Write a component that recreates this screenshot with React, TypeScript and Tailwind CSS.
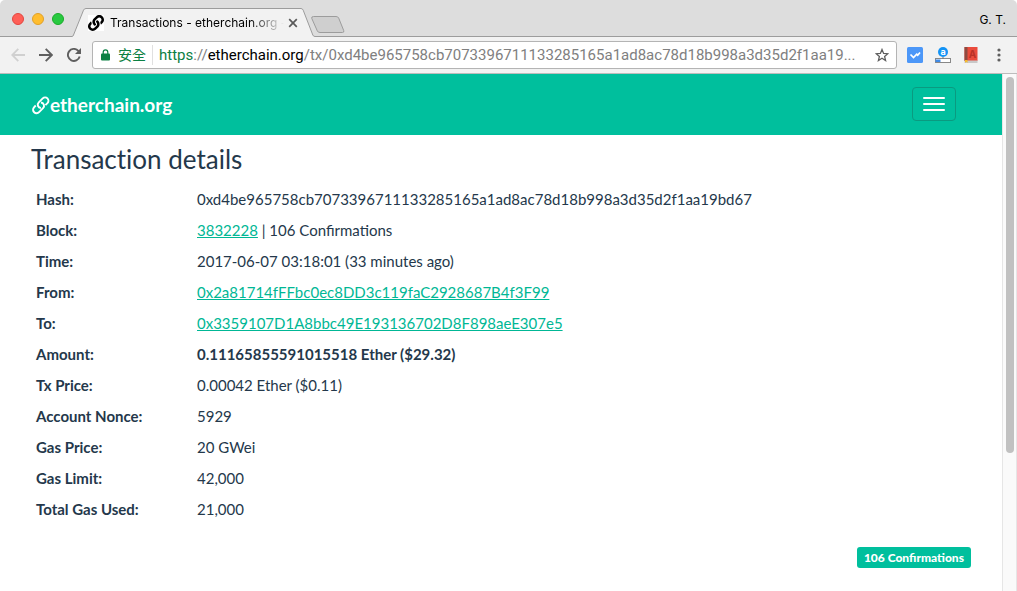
import type { ReactNode } from 'react';
import { FaLink } from 'react-icons/fa';

const ADDRESS_REST = '/tx/0xd4be965758cb7073396711133285165a1ad8ac78d18b998a3d35d2f1aa19...';

const ChainIcon = ({ className }: { className?: string }) => (
  <svg viewBox="0 0 24 24" className={className} fill="none" stroke="currentColor" aria-hidden="true">
    <path d="M12.500 8.200a4.200 4.200 0 0 1 2.700 7.200l-5 5a4.200 4.200 0 0 1-6.400-6l2.200-2.400" />
    <path d="M12.500 15.200a4.200 4.200 0 0 1-2.700-7.200l5-5a4.200 4.200 0 0 1 6 6l-2.600 2.600" />
  </svg>
);

const TabStrip = () => (
  <div className="flex h-[37px] items-end overflow-hidden rounded-t-[5px] bg-[#dddddd]">
    <div className="flex h-full w-[72px] shrink-0 items-center gap-2 border-b border-[#9c9c9c] pl-3 pt-0.5">
      <button aria-label="Close window" className="size-3 rounded-full border border-[#e2463f] bg-[#ff5f57]" />
      <button aria-label="Minimize window" className="size-3 rounded-full border border-[#e0a029] bg-[#ffbd2e]" />
      <button aria-label="Zoom window" className="size-3 rounded-full border border-[#1aab29] bg-[#28c940]" />
    </div>
    <svg viewBox="0 0 14 29" className="h-[29px] w-[14px] shrink-0" aria-hidden="true">
      <path d="M0 29v-.5q1 0 1.5-1.5L11.500 2.200Q12.200.5 14 .5V29Z" fill="#f2f2f2" />
      <path d="M0 28.500q1 0 1.500-1.500L11.500 2.200Q12.200.5 14 .5" fill="none" stroke="#9c9c9c" />
    </svg>
    <div className="flex h-[29px] w-[215px] shrink-0 items-center border-t border-[#9c9c9c] bg-[#f2f2f2]">
      <span className="ml-0.5 bg-white text-black">
        <FaLink className="size-4" aria-hidden="true" />
      </span>
      <span className="ml-1.5 w-[174px] whitespace-nowrap bg-linear-to-r from-black from-80% to-transparent to-100% bg-clip-text font-[Inter,sans-serif] text-xs text-transparent">
        Transactions - etherchain.org -
      </span>
      <button aria-label="Close tab" className="ml-1">
        <svg viewBox="0 0 10 10" className="size-[10px]" stroke="#5a5a5a" strokeWidth="1.7" aria-hidden="true">
          <path d="m1.200 1.200 7.600 7.600m0-7.600-7.600 7.600" />
        </svg>
      </button>
    </div>
    <svg viewBox="0 0 14 29" className="h-[29px] w-[14px] shrink-0" aria-hidden="true">
      <path d="M0 .5q1.500 0 2.200 1.700L11.800 27q.6 1.500 2.200 1.500v.5H0Z" fill="#f2f2f2" />
      <path d="M0 .5q1.500 0 2.200 1.700L11.800 27q.6 1.500 2.200 1.500" fill="none" stroke="#9c9c9c" />
    </svg>
    <div className="flex h-full grow items-center justify-between border-b border-[#9c9c9c] pr-[11px]">
      <button aria-label="New tab" className="-ml-1 mt-3">
        <svg viewBox="0 0 34 17" className="h-[17px] w-[34px]" aria-hidden="true">
          <path
            d="M2.500.5h22.500q2 0 2.700 1.600l5 12.400q.7 2-1.200 2H9q-2 0-2.700-1.600L.8 2.500Q.2.5 2.500.5Z"
            fill="#cfcfcf"
            stroke="#9c9c9c"
          />
        </svg>
      </button>
      <button className="pt-1 font-[Inter,sans-serif] text-xs text-black">G. T.</button>
    </div>
  </div>
);

const Toolbar = () => (
  <div className="flex h-[37px] items-center border-b border-[#bcbcbc] bg-[#f2f2f2] pl-[11px] pr-3">
    <button aria-label="Back" className="text-[#d0d0d0]">
      <svg viewBox="0 0 14 14" className="size-[14px]" fill="none" stroke="currentColor" strokeWidth="1.800" aria-hidden="true">
        <path d="M14 7H1.500M7.300.8 1.200 7l6.100 6.200" />
      </svg>
    </button>
    <button aria-label="Forward" className="ml-3.5 text-[#5f5f5f]">
      <svg viewBox="0 0 14 14" className="size-[14px]" fill="none" stroke="currentColor" strokeWidth="1.900" aria-hidden="true">
        <path d="M0 7h12.500M6.700.8 12.800 7l-6.100 6.200" />
      </svg>
    </button>
    <button aria-label="Reload" className="ml-3.5 text-[#5f5f5f]">
      <svg viewBox="0 0 14 14" className="size-[14px]" fill="none" stroke="currentColor" strokeWidth="1.900" aria-hidden="true">
        <path d="M12.700 8.500A6 6 0 1 1 11.300 2.800L12.500 4.200" />
        <path d="M14 0v6H8Z" fill="currentColor" stroke="none" />
      </svg>
    </button>
    <div className="ml-[11px] flex h-7 min-w-0 grow items-center rounded-[3px] border border-[#b4b4b4] bg-white font-[Roboto,'Noto_Sans_CJK_TC',sans-serif]">
      <svg viewBox="0 0 9 12" className="ml-2 h-3 w-[9px] shrink-0 text-[#0b8043]" aria-hidden="true">
        <path d="M2.200 5V3.200a2.300 2.300 0 0 1 4.600 0V5" fill="none" stroke="currentColor" strokeWidth="1.200" />
        <rect y="4.500" width="9" height="7" rx="1" fill="currentColor" />
      </svg>
      <span className="ml-2 shrink-0 text-sm text-[#0b8043]">安全</span>
      <span className="ml-1.5 h-5 w-px shrink-0 bg-[#e0e0e0]" />
      <span className="ml-1.5 grow whitespace-nowrap text-[15px] text-[#808080]">
        <span className="text-[#0b8043]">https</span>://<span className="text-black">etherchain.org</span>
        {ADDRESS_REST}
      </span>
      <button aria-label="Bookmark this page" className="mr-[7px] shrink-0">
        <svg viewBox="0 0 14 14" className="size-[14px]" fill="none" stroke="#5f5f5f" strokeWidth="1.300" aria-hidden="true">
          <path d="m7 1.500 1.600 3.900 4.200.3-3.200 2.700 1 4.100L7 10.300l-3.600 2.200 1-4.100L1.200 5.700l4.200-.3Z" />
        </svg>
      </button>
    </div>
    <div className="ml-2.5 flex shrink-0 items-center">
      <button aria-label="Tasks extension">
        <svg viewBox="0 0 16 16" className="size-4" aria-hidden="true">
          <rect width="16" height="16" rx="1.500" fill="#4c97f8" />
          <path d="m3.500 7.500 3 3 3.200-3.300 1 1 2.300-2.700" fill="none" stroke="#fff" strokeWidth="1.700" />
        </svg>
      </button>
      <button aria-label="Rank extension" className="ml-3">
        <svg viewBox="0 0 16 17" className="h-[17px] w-4" aria-hidden="true">
          <circle cx="8" cy="5" r="5" fill="#1393f5" />
          <text x="8" y="8" textAnchor="middle" fill="#fff" className="font-[Inter,sans-serif] text-[9px] font-bold">a</text>
          <rect x=".5" y="11.500" width="15" height="4" fill="#fff" stroke="#888" />
          <path d="M.5 12.500h5v2.500h-5z" fill="#3f8be8" />
          <path d="M8 10v2" stroke="#777" />
        </svg>
      </button>
      <button aria-label="Dictionary extension" className="ml-3">
        <svg viewBox="0 0 16 16" className="size-4" aria-hidden="true">
          <path d="M1.500 0H14.500V14H1.500Z" fill="#ea4b3c" />
          <path d="M1.500 0H4.500V14H1.500Z" fill="#8f4a40" />
          <path d="M1.500 13.500h13V16h-13z" fill="#c9c9c9" />
          <path d="M2 13h2.500v3L3.200 14.800 2 16Z" fill="#f5b92a" />
          <text x="9.500" y="10.500" textAnchor="middle" fill="#b93226" className="font-[Inter,sans-serif] text-[10px] font-bold">A</text>
        </svg>
      </button>
      <button aria-label="Menu" className="ml-3.5">
        <svg viewBox="0 0 12 14" className="h-[14px] w-3" fill="#5f5f5f" aria-hidden="true">
          <circle cx="6" cy="2" r="1.600" />
          <circle cx="6" cy="7" r="1.600" />
          <circle cx="6" cy="12" r="1.600" />
        </svg>
      </button>
    </div>
  </div>
);

const Navbar = () => (
  <nav className="flex h-[61px] items-start justify-between bg-[#00bf9d] pl-[31px] pr-[46px] pt-[13px] text-white">
    <a href="#home" className="flex items-center text-[19px] leading-9 font-bold">
      <ChainIcon className="size-[19px] stroke-[2.400]" />
      etherchain.org
    </a>
    <button
      aria-label="Toggle navigation"
      className="flex h-[34px] w-11 flex-col items-center justify-center gap-1 rounded border border-[#0a9a80]"
    >
      <span className="h-0.5 w-[22px] rounded-[1px] bg-white" />
      <span className="h-0.5 w-[22px] rounded-[1px] bg-white" />
      <span className="h-0.5 w-[22px] rounded-[1px] bg-white" />
    </button>
  </nav>
);

const Row = ({ label, children }: { label: string; children: ReactNode }) => (
  <tr>
    <th scope="row" className="w-[161px] p-[5px] text-left font-bold">{label}</th>
    <td className="p-[5px]">{children}</td>
  </tr>
);

const AddressLink = ({ value }: { value: string }) => (
  <a href={`#${value}`} className="text-[#00b795] underline">{value}</a>
);

const App = () => (
  <div className="flex min-h-screen flex-col bg-white">
    <TabStrip />
    <Toolbar />
    <div className="flex grow">
      <div className="min-w-0 grow font-[Lato,sans-serif] text-[15px] leading-[21px] text-[#24384b]">
        <Navbar />
        <main className="px-[31px]">
          <h1 className="pt-[7px] text-[26px] leading-[34px] [font-variant-ligatures:none]">Transaction details</h1>
          <table className="mt-2 w-full table-fixed">
            <tbody>
              <Row label="Hash:">0xd4be965758cb7073396711133285165a1ad8ac78d18b998a3d35d2f1aa19bd67</Row>
              <Row label="Block:"><AddressLink value="3832228" /> | 106 Confirmations</Row>
              <Row label="Time:">2017-06-07 03:18:01 (33 minutes ago)</Row>
              <Row label="From:"><AddressLink value="0x2a81714fFFbc0ec8DD3c119faC2928687B4f3F99" /></Row>
              <Row label="To:"><AddressLink value="0x3359107D1A8bbc49E193136702D8F898aeE307e5" /></Row>
              <Row label="Amount:"><b>0.11165855591015518 Ether ($29.32)</b></Row>
              <Row label="Tx Price:">0.00042 Ether ($0.11)</Row>
              <Row label="Account Nonce:">5929</Row>
              <Row label="Gas Price:">20 GWei</Row>
              <Row label="Gas Limit:">42,000</Row>
              <Row label="Total Gas Used:">21,000</Row>
            </tbody>
          </table>
          <div className="mt-[22px] flex justify-end">
            <span className="rounded-[3px] bg-[#00bf9d] px-[7px] text-xs leading-[21px] font-black text-white">106 Confirmations</span>
          </div>
        </main>
      </div>
      {/* Scrollbar */}
      <div className="w-[15px] shrink-0 border-x border-[#e6e6e6] bg-[#fafafa] px-[3px] pt-[3px]">
        <div className="h-[376px] w-2 rounded-full bg-[#c1c1c1]" />
      </div>
    </div>
  </div>
);

export default App;
